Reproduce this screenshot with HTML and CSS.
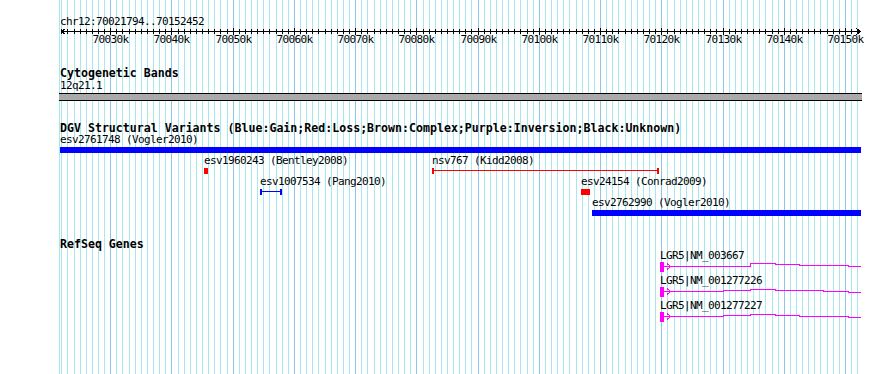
FILE: index.html
```html
<!DOCTYPE html>
<html>
    <head>
        <meta charset="utf-8">
        <title>chr12:70021794..70152452</title>
        <link rel="stylesheet" href="styles.css">
    </head>

    <body>

        <div class="browser">

            <!-- grid lines, filled in by script.js -->
            <svg id="grid" class="grid" width="890" height="374"></svg>

            <div class="tracks">

                <div class="ruler">
                    <div class="ruler-label">chr12:70021794..70152452</div>
                    <svg id="axis" class="axis" width="802" height="21"></svg>
                </div>

                <div class="track cyto">
                    <div class="track-title">Cytogenetic Bands</div>
                    <div class="band-label">12q21.1</div>
                    <div class="band"></div>
                </div>

                <div class="track dgv">
                    <div class="track-title">DGV Structural Variants (Blue:Gain;Red:Loss;Brown:Complex;Purple:Inversion;Black:Unknown)</div>

                    <div class="row">
                        <span class="label" style="left: 0px">esv2761748 (Vogler2010)</span>
                        <div class="glyph box blue" style="left: 0px; width: 801px"></div>
                    </div>

                    <div class="row">
                        <span class="label" style="left: 144px">esv1960243 (Bentley2008)</span>
                        <div class="glyph box red" style="left: 144px; width: 4px"></div>
                        <span class="label" style="left: 372px">nsv767 (Kidd2008)</span>
                        <div class="glyph span red" style="left: 372px; width: 227px"></div>
                    </div>

                    <div class="row">
                        <span class="label" style="left: 200px">esv1007534 (Pang2010)</span>
                        <div class="glyph span blue" style="left: 200px; width: 22px"></div>
                        <span class="label" style="left: 521px">esv24154 (Conrad2009)</span>
                        <div class="glyph box red" style="left: 521px; width: 9px"></div>
                    </div>

                    <div class="row">
                        <span class="label" style="left: 532px">esv2762990 (Vogler2010)</span>
                        <div class="glyph box blue" style="left: 532px; width: 269px"></div>
                    </div>
                </div>

                <div class="track genes">
                    <div class="track-title">RefSeq Genes</div>

                    <div class="row gene-row">
                        <span class="label" style="left: 600px">LGR5|NM_003667</span>
                        <svg class="gene" style="left: 600px" width="202" height="10">
                            <rect x="0" y="0" width="4" height="10"/>
                            <path d="M4 4.5 H12 M7 1.5 L10.5 4.5 L7 7.5"/>
                            <path d="M12 4.5 H90 V1.5 H115 V2.5 H139 V3.5 H188 V4.5 H201"/>
                        </svg>
                    </div>

                    <div class="row gene-row">
                        <span class="label" style="left: 600px">LGR5|NM_001277226</span>
                        <svg class="gene" style="left: 600px" width="202" height="10">
                            <rect x="0" y="0" width="4" height="10"/>
                            <path d="M4 4.5 H12 M7 1.5 L10.5 4.5 L7 7.5"/>
                            <path d="M12 4.5 H63 V3.5 H90 V2.5 H115 V3.5 H163 V4.5 H188 V5.5 H201"/>
                        </svg>
                    </div>

                    <div class="row gene-row">
                        <span class="label" style="left: 600px">LGR5|NM_001277227</span>
                        <svg class="gene" style="left: 600px" width="202" height="10">
                            <rect x="0" y="0" width="4" height="10"/>
                            <path d="M4 4.5 H12 M7 1.5 L10.5 4.5 L7 7.5"/>
                            <path d="M12 4.5 H63 V3.5 H90 V2.5 H115 V3.5 H139 V4.5 H188 V5.5 H201"/>
                        </svg>
                    </div>
                </div>

            </div>

        </div>

        <script src="script.js"></script>

    </body>
</html>
```

FILE: styles.css
```css
body {
    margin: 0;
    background: #ffffff;
    color: #000000;
    font-family: "DejaVu Sans Mono", "Liberation Mono", monospace;
    font-size: 11px;
    letter-spacing: -0.62px;
    line-height: 11px;
}

.browser {
    position: relative;
    width: 890px;
    height: 374px;
    overflow: hidden;
}

/* background grid */
.grid {
    position: absolute;
    top: 0;
    left: 0;
}

.grid line {
    stroke-width: 1;
    shape-rendering: crispEdges;
}

.grid .minor {
    stroke: #a6e8ee;
}

.grid .major {
    stroke: #8cc6e8;
}

.tracks {
    position: relative;
    width: 802px;
    padding-left: 60px;
}

/* ruler */
.ruler {
    height: 32px;
    padding-top: 16px;
}

.ruler-label {
    white-space: nowrap;
}

.axis {
    display: block;
    overflow: visible;
}

.axis line,
.axis polyline {
    stroke: #000000;
    fill: none;
    shape-rendering: crispEdges;
}

.axis text {
    font-family: "DejaVu Sans Mono", "Liberation Mono", monospace;
    font-size: 11px;
    letter-spacing: -0.62px;
    fill: #000000;
}

/* tracks */
.track-title {
    font-weight: bold;
    font-size: 11.6px;
    letter-spacing: 0;
    line-height: 12px;
    white-space: nowrap;
}

.cyto {
    margin-top: 19px;
}

.band-label {
    margin-top: 1px;
}

.band {
    box-sizing: border-box;
    width: 803px;
    height: 8px;
    margin: 2px 0 0 -1px;
    border-top: 1px solid #000000;
    border-bottom: 1px solid #000000;
    background: #aaaaaa;
}

.dgv {
    margin-top: 21px;
}

.genes {
    margin-top: 20px;
}

.row {
    position: relative;
    height: 21px;
}

.gene-row {
    height: 25px;
}

.label {
    position: absolute;
    top: 0;
    white-space: nowrap;
}

.glyph {
    position: absolute;
    top: 13px;
    height: 6px;
}

.box.blue {
    background: #0000ff;
}

.box.red {
    background: #ff0000;
}

/* line with end caps */
.span {
    box-sizing: border-box;
    border-left: 2px solid currentColor;
    border-right: 2px solid currentColor;
    background: linear-gradient(currentColor, currentColor) 0 2px / 100% 1px no-repeat;
}

.span.red {
    color: #ff0000;
}

.span.blue {
    color: #0000ff;
}

.gene {
    position: absolute;
    top: 12px;
    overflow: visible;
}

.gene rect {
    fill: #ff00ff;
    shape-rendering: crispEdges;
}

.gene path {
    stroke: #ff00ff;
    fill: none;
    shape-rendering: crispEdges;
}
```

FILE: script.js
```js
var START = 70021794;
var END = 70152452;
var LEFT = 60;
var WIDTH = 800;

function toX(pos) {
    return Math.round(LEFT + (pos - START) * WIDTH / (END - START));
}

// one light line per kb, a darker one every 10 kb
function drawGrid() {
    var svg = document.getElementById("grid");
    var html = '<line class="minor" x1="59.5" y1="0" x2="59.5" y2="374"/>';

    for (var k = Math.ceil(START / 1000); k * 1000 <= END; k++) {
        var x = toX(k * 1000) + 0.5;
        var cls = (k % 10 == 0) ? "major" : "minor";
        html += '<line class="' + cls + '" x1="' + x + '" y1="0" x2="' + x + '" y2="374"/>';
    }

    svg.innerHTML = html;
}

// the svg starts at x = LEFT, axis runs along y = 4
function drawRuler() {
    var svg = document.getElementById("axis");
    var html = '<line x1="1" y1="4.5" x2="801" y2="4.5"/>';
    html += '<polyline points="5.5,1.5 1.5,4.5 5.5,7.5"/>';
    html += '<polyline points="796.5,1.5 800.5,4.5 796.5,7.5"/>';

    for (var k = Math.ceil(START / 1000); k * 1000 <= END; k++) {
        var x = toX(k * 1000) - LEFT + 0.5;

        if (k % 10 == 0) {
            html += '<line x1="' + x + '" y1="1" x2="' + x + '" y2="8"/>';
            html += '<text x="' + x + '" y="16" text-anchor="middle">' + k + 'k</text>';
        } else {
            html += '<line x1="' + x + '" y1="2" x2="' + x + '" y2="7"/>';
        }
    }

    svg.innerHTML = html;
}

drawGrid();
drawRuler();
```
